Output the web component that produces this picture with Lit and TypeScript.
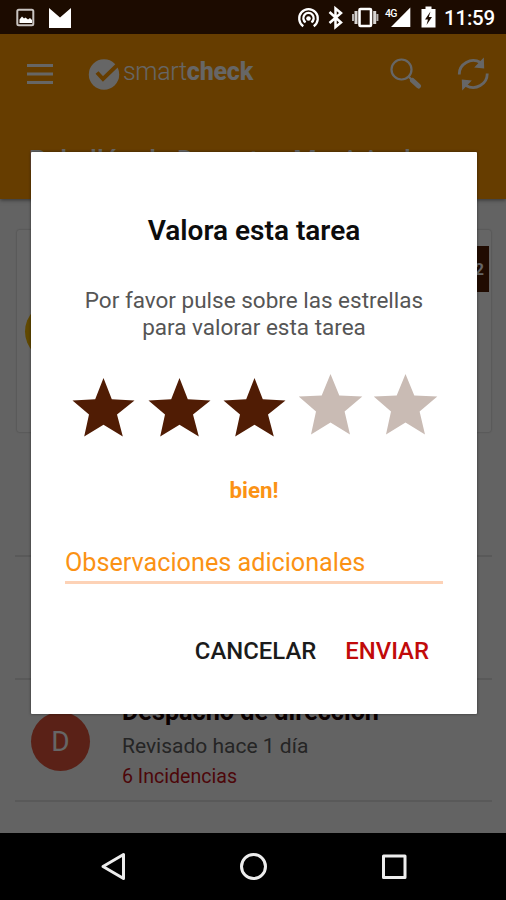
import { LitElement, html, css, svg } from "lit";
import { customElement, property } from "lit/decorators.js";
import { classMap } from "lit/directives/class-map.js";

@customElement("status-bar")
class StatusBar extends LitElement {
  static styles = css`
    :host { display: flex; align-items: center; height: 34px; background: #1c0b00; color: #fff; box-sizing: border-box; }
    svg { display: block; }
    .clock { font: 500 20.5px/34px Roboto, sans-serif; letter-spacing: -0.2px; margin-left: auto; padding-right: 11px; padding-top: 2px; }
  `;
  render() {
    return html`
      <svg width="440" height="34" viewBox="0 0 440 34">
        <rect x="17.3" y="9.8" width="16" height="15.4" rx="1.5" fill="none" stroke="#c9c4c1" stroke-width="2"/>
        <path d="M19.500 23v-3.500l2.500-3 2 2 1.500-1 2.500 2 2-1.500 2 2V23z" fill="#fff"/>
        <path d="M49 8l11 9.500L71 8v20H49z" fill="#fff"/>
        <g fill="none" stroke="#fff" stroke-width="2.300">
          <path d="M303.300 26.200A9.300 9.300 0 1 1 313.700 26.200"/>
          <path d="M305.600 22.400A5.200 5.200 0 1 1 311.400 22.400"/>
        </g>
        <circle cx="308.500" cy="18.500" r="2.300" fill="#fff"/>
        <path d="M329.500 12l11.500 10.500-5.500 4.500V8.500l5.500 4.500-11.500 10" fill="none" stroke="#fff" stroke-width="2.500"/>
        <rect x="359.500" y="9" width="11.500" height="17" rx="1" fill="none" stroke="#fff" stroke-width="2.600"/>
        <path d="M356 11v13M374.700 11v13" stroke="#d8d5d3" stroke-width="3"/>
        <path d="M353 14v7M377.400 14v7" stroke="#b8b4b2" stroke-width="2"/>
        <text x="385" y="16.500" fill="#fff" font-family="Roboto, sans-serif" font-weight="500" font-size="10.500" textLength="12.500">4G</text>
        <path d="M410.300 7.500V27H391z" fill="#fff"/>
        <path d="M421.500 9h4V6.500h6V9h4v18.500h-14z" fill="#fff"/>
        <path d="M430.500 11.500l-5.500 8h3l-1.500 5.500 5.500-8h-3.200z" fill="#1c0b00"/>
      </svg>
      <span class="clock">11:59</span>
    `;
  }
}

@customElement("app-header")
class AppHeader extends LitElement {
  static styles = css`
    :host { display: flex; flex-direction: column; height: 165px; background: #ff9900; color: #fff; box-shadow: 0 1px 4px rgba(0,0,0,.5); font-family: Roboto, sans-serif; }
    .toolbar { display: flex; align-items: center; height: 79px; padding: 0 16px 0 26px; }
    svg { display: block; flex: none; }
    .logo { margin-left: 34px; }
    .brand { font-size: 25px; line-height: 30px; font-weight: 300; white-space: nowrap; margin: -4px 0 0 3px; letter-spacing: -0.3px; }
    .brand b { font-weight: 800; letter-spacing: -0.2px; }
    .search { margin-left: auto; }
    .sync { margin-left: 34px; }
    .title { margin: 32px 0 0 29px; font-size: 26.900px; line-height: 32px; font-weight: 500; white-space: nowrap; }
  `;
  render() {
    return html`
      <div class="toolbar">
        <svg width="28" height="20" viewBox="0 0 28 20"><path d="M1 1.500h26M1 10h26M1 18.500h26" stroke="#fff" stroke-width="2.800"/></svg>
        <svg class="logo" width="32" height="32" viewBox="0 0 32 32">
          <circle cx="16" cy="16.500" r="15.200" fill="#fff"/>
          <path d="M9 14.500l6 6.500L31 5.500" fill="none" stroke="#ff9900" stroke-width="4"/>
        </svg>
        <span class="brand">smart<b>check</b></span>
        <svg class="search" width="32" height="32" viewBox="0 0 32 32">
          <circle cx="11.500" cy="11.500" r="10" fill="none" stroke="#fff" stroke-width="2.200"/>
          <path d="M18.500 18.500l3.500 3.500" stroke="#fff" stroke-width="2.200"/>
          <path d="M22.500 22.500l6 5.500" stroke="#fff" stroke-width="5" stroke-linecap="round"/>
        </svg>
        <svg class="sync" width="34" height="34" viewBox="0 0 34 34">
          <g fill="none" stroke="#fff" stroke-width="2.800">
            <path d="M3.300 17.500A14 13.500 0 0 1 24.500 5.500"/>
            <path d="M31.200 16.500A14 13.500 0 0 1 10 28.500"/>
          </g>
          <path d="M27.800 0.500l.4 11-10-1zM6.200 33.500l-.4-11 10 1z" fill="#fff"/>
        </svg>
      </div>
      <div class="title">Pabellón de Deportes Municipal</div>
    `;
  }
}

@customElement("task-list")
class TaskList extends LitElement {
  static styles = css`
    :host { display: block; padding: 31px 14px 0 15px; font-family: Roboto, sans-serif; }
    .card { display: flex; align-items: center; height: 202px; margin: 0 1px 2.500px 2px; background: #fcfcfc; border-radius: 2px; box-shadow: 0 0 2px rgba(0,0,0,.35); padding-left: 8px; box-sizing: border-box; }
    .avatar { width: 59px; height: 59px; border-radius: 50%; background: #e0533a; color: #fff; display: grid; place-items: center; font-size: 28px; flex: none; }
    .row .avatar { margin-top: 3px; }
    .avatar.gold { background: #f0b400; }
    .count { margin-left: auto; align-self: flex-start; margin-top: 16px; margin-right: 2px; width: 46px; height: 46px; background: #501c04; color: #fff; font-size: 16px; font-weight: 700; line-height: 47px; text-align: right; padding-right: 5px; box-sizing: border-box; }
    .row { height: 122.500px; border-bottom: 2px solid #dedede; box-sizing: border-box; display: flex; align-items: center; padding-left: 16px; }
    .text { margin: 8px 0 0 32px; white-space: nowrap; }
    .name { font-size: 25.200px; line-height: 30px; font-weight: 700; color: #1a0000; }
    .state { font-size: 21px; line-height: 32px; color: #5c5c5c; margin-top: 3px; }
    .issues { font-size: 19.600px; line-height: 29px; color: #c01018; }
  `;
  render() {
    return html`
      <div class="card"><div class="avatar gold"></div><div class="count">2</div></div>
      <div class="row"></div>
      <div class="row"></div>
      <div class="row">
        <div class="avatar">D</div>
        <div class="text">
          <div class="name">Despacho de dirección</div>
          <div class="state">Revisado hace 1 día</div>
          <div class="issues">6 Incidencias</div>
        </div>
      </div>
    `;
  }
}

@customElement("rating-dialog")
class RatingDialog extends LitElement {
  @property({ type: Number }) value = 3;
  static styles = css`
    :host { display: flex; flex-direction: column; width: 446px; height: 562px; box-sizing: border-box; padding: 61px 34px 0; background: #fff; border-radius: 1px; box-shadow: 0 0 3px rgba(0,0,0,.5); font-family: Roboto, sans-serif; }
    h1 { margin: 0; font-size: 28px; line-height: 36px; font-weight: 600; color: #0c0c0c; text-align: center; white-space: nowrap; }
    p { margin: 38px 0 0; font-size: 22.500px; line-height: 27px; color: #555; text-align: center; white-space: nowrap; }
    .stars { display: flex; margin: 32px 0 0 7px; height: 68px; }
    .star { width: 75.500px; height: 68px; flex: none; fill: #c9bbb4; }
    .star.on { fill: #501c04; }
    .label { margin-top: 35px; text-align: center; font-size: 22.300px; line-height: 28px; font-weight: 700; color: #fb9214; }
    .field { margin: 32px 0 0; width: 378px; height: 48px; border-bottom: 3px solid #fdd2b6; box-sizing: border-box; font-size: 25.200px; line-height: 54px; color: #fb9214; white-space: nowrap; }
    .actions { display: flex; justify-content: flex-end; gap: 29px; margin: 51px 14px 0 0; font-size: 23.900px; line-height: 32px; font-weight: 500; color: #1b1b1b; }
    .send { color: #c10a0a; }
  `;
  star(on: boolean) {
    const points = on
      ? "31.500,5 39.800,26.300 62.500,27.500 45,41.500 50.800,63.500 31.500,51.800 12.200,63.500 17,41.500 0.500,27.500 23.200,26.300"
      : "31.500,1 40.300,22.600 63.300,23.500 45.600,38.500 51,61.500 31.500,49.500 12,61.500 17,38.500 -0.200,23.500 22.700,22.600";
    return html`<svg class=${classMap({ star: true, on })} viewBox="0 0 75.500 68">${svg`<polygon points=${points}/>`}</svg>`;
  }
  render() {
    return html`
      <h1>Valora esta tarea</h1>
      <p>Por favor pulse sobre las estrellas<br>para valorar esta tarea</p>
      <div class="stars">${[1, 2, 3, 4, 5].map((n) => this.star(n <= this.value))}</div>
      <div class="label">bien!</div>
      <div class="field">Observaciones adicionales</div>
      <div class="actions"><span>CANCELAR</span><span class="send">ENVIAR</span></div>
    `;
  }
}

@customElement("app-root")
class AppRoot extends LitElement {
  static styles = css`
    :host { display: flex; flex-direction: column; width: 506px; height: 900px; overflow: hidden; background: #000; }
    .screen { position: relative; height: 799px; background: #f7f7f7; overflow: hidden; }
    .scrim { position: absolute; inset: 0; background: rgba(0,0,0,.6); box-sizing: border-box; padding: 118px 0 0 31px; }
    .nav { flex: 1; background: #000; display: flex; justify-content: center; }
    .nav svg { display: block; }
  `;
  render() {
    return html`
      <status-bar></status-bar>
      <div class="screen">
        <app-header></app-header>
        <task-list></task-list>
        <div class="scrim"><rating-dialog .value=${3}></rating-dialog></div>
      </div>
      <div class="nav">
        <svg width="506" height="67" viewBox="0 0 506 67" fill="none" stroke="#ededed" stroke-width="3" stroke-linejoin="round">
          <path d="M123.500 21.500v24L103 33.500z"/>
          <circle cx="253.500" cy="33.500" r="12"/>
          <rect x="383.500" y="23" width="21.500" height="21.500"/>
        </svg>
      </div>
    `;
  }
}
